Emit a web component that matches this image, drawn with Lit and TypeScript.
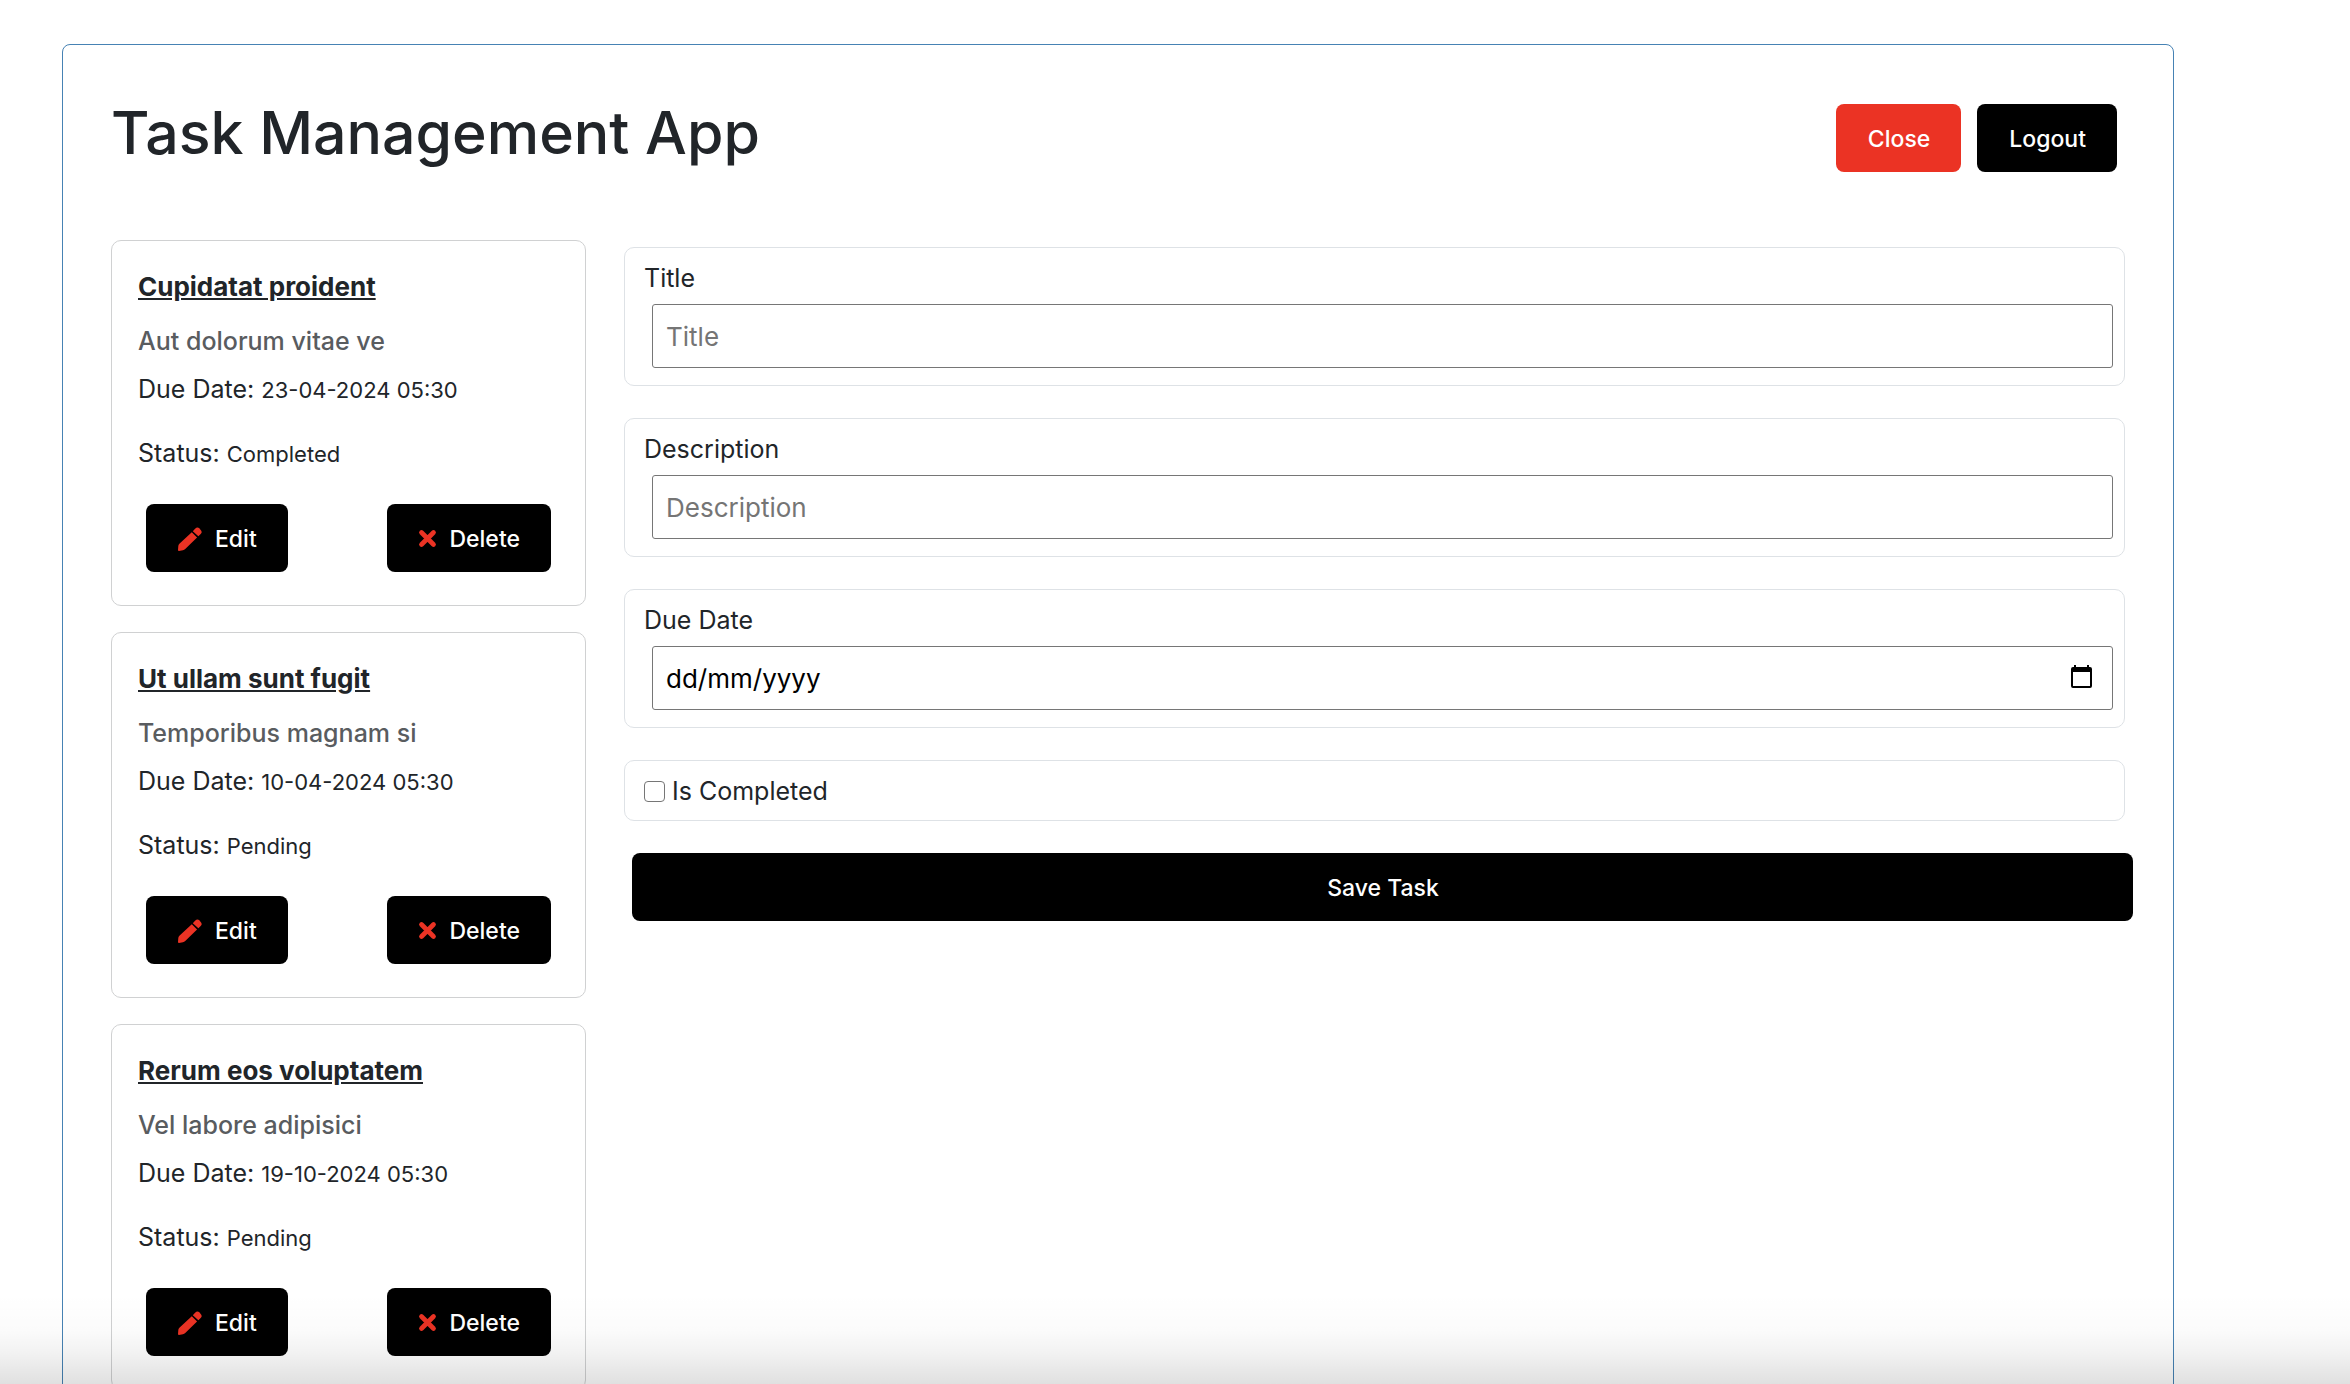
import { LitElement, html, css, svg } from "lit";
import { customElement, property, state } from "lit/decorators.js";

interface Task {
  title: string;
  description: string;
  due: string;
  completed: boolean;
}

const TASKS: Task[] = [
  { title: "Cupidatat proident", description: "Aut dolorum vitae ve", due: "23-04-2024 05:30", completed: true },
  { title: "Ut ullam sunt fugit", description: "Temporibus magnam si", due: "10-04-2024 05:30", completed: false },
  { title: "Rerum eos voluptatem", description: "Vel labore adipisici", due: "19-10-2024 05:30", completed: false },
];

const shared = css`
  *,
  *::before,
  *::after {
    box-sizing: border-box;
  }
  h1,
  h2,
  p {
    margin: 0;
  }
  .btn {
    display: inline-flex;
    align-items: center;
    justify-content: center;
    height: 68px;
    padding: 1px 31px 0 32px;
    border: 0;
    border-radius: 8px;
    background: #000;
    color: #fff;
    font: 500 23px/36px Inter, "Liberation Sans", sans-serif;
    cursor: pointer;
  }
  .btn-danger {
    background: #eb3324;
  }
`;

const pencilIcon = svg`
  <path d="M42 16L58 32L22 67Q19 70 15 71L3 73Q0 73 0 70L1 57Q2 53 5 50Z" />
  <path d="M45 13L52 5Q59 -2 65 4L69 9Q75 16 69 21L62 28Z" />
`;

@customElement("task-card")
export class TaskCard extends LitElement {
  @property({ attribute: false }) task!: Task;

  static styles = [
    shared,
    css`
      :host {
        display: block;
      }
      .card {
        padding: 26px;
        border: 1px solid #d0d1d2;
        border-radius: 10px;
        background: #fff;
      }
      .title {
        padding-top: 4px;
        font-size: 26px;
        font-weight: 700;
        line-height: 32px;
        text-decoration: underline;
      }
      .description {
        padding-top: 22px;
        color: #595c5f;
        font-size: 25px;
        font-weight: 500;
        line-height: 32px;
      }
      .meta {
        padding-top: 16px;
        font-size: 25px;
        line-height: 32px;
      }
      .meta + .meta {
        padding-top: 32px;
      }
      .value {
        font-size: 22px;
        line-height: 24px;
      }
      .actions {
        display: flex;
        justify-content: space-between;
        padding: 35px 8px 7px;
      }
      .icon {
        flex: none;
        overflow: visible;
        fill: #eb3324;
      }
      .icon-edit {
        width: 24px;
        height: 24px;
        margin-right: 13px;
      }
      .icon-delete {
        width: 17px;
        height: 17px;
        margin-right: 13px;
      }
    `,
  ];

  render() {
    const { title, description, due, completed } = this.task;
    return html`
      <article class="card">
        <h2 class="title">${title}</h2>
        <p class="description">${description}</p>
        <p class="meta">Due Date: <span class="value">${due}</span></p>
        <p class="meta">Status: <span class="value">${completed ? "Completed" : "Pending"}</span></p>
        <div class="actions">
          <button class="btn" type="button">
            <svg class="icon icon-edit" viewBox="0 0 73 73" aria-hidden="true">${pencilIcon}</svg>
            Edit
          </button>
          <button class="btn" type="button">
            <svg class="icon icon-delete" viewBox="0 0 17 17" aria-hidden="true">
              <path d="M2.5 2.5L14.5 14.5M14.5 2.5L2.5 14.5" stroke="#eb3324" stroke-width="4.7" stroke-linecap="round" />
            </svg>
            Delete
          </button>
        </div>
      </article>
    `;
  }
}

@customElement("task-form")
export class TaskForm extends LitElement {
  static styles = [
    shared,
    css`
      :host {
        display: block;
      }
      .form {
        display: flex;
        flex-direction: column;
        gap: 32px;
      }
      .field {
        display: flex;
        flex-direction: column;
        padding: 12px 11px 17px 19px;
        border: 1px solid #dee2e6;
        border-radius: 10px;
      }
      .label {
        font-size: 25px;
        line-height: 36px;
      }
      .control {
        display: flex;
        align-items: center;
        height: 64px;
        margin: 8px 0 0 8px;
        padding: 0 20px 0 0;
        border: 1px solid #767676;
        border-radius: 3px;
        background: #fff;
      }
      .input {
        flex: 1;
        min-width: 0;
        height: 100%;
        padding: 0 13px;
        border: 0;
        background: none;
        color: #000;
        font: 400 26px/36px Inter, "Liberation Sans", sans-serif;
        outline: none;
      }
      .input::placeholder {
        color: #757575;
        opacity: 1;
      }
      .input-date::placeholder {
        color: #000;
      }
      .picker {
        display: flex;
        padding: 0;
        border: 0;
        background: none;
        cursor: pointer;
      }
      .picker-icon {
        width: 21px;
        height: 26px;
      }
      .field-check {
        flex-direction: row;
        align-items: center;
        gap: 7px;
        padding: 12px 19px 11px;
      }
      .checkbox {
        appearance: none;
        width: 21px;
        height: 21px;
        margin: 0;
        border: 1px solid #767676;
        border-radius: 4px;
        background: #fff;
      }
      .checkbox:checked {
        background: #0075ff;
      }
      .save {
        margin: 0 -8px 0 8px;
      }
    `,
  ];

  render() {
    return html`
      <form class="form" @submit=${(e: Event) => e.preventDefault()}>
        <div class="field">
          <label class="label" for="title">Title</label>
          <div class="control"><input class="input" id="title" type="text" placeholder="Title" /></div>
        </div>
        <div class="field">
          <label class="label" for="description">Description</label>
          <div class="control"><input class="input" id="description" type="text" placeholder="Description" /></div>
        </div>
        <div class="field">
          <label class="label" for="due">Due Date</label>
          <div class="control">
            <input class="input input-date" id="due" type="text" inputmode="numeric" placeholder="dd/mm/yyyy" />
            <button class="picker" type="button" aria-label="Show date picker">
              <svg class="picker-icon" viewBox="0 0 21 26" aria-hidden="true">
                <path fill-rule="evenodd" d="M3 0h2v2h11V0h2v2h1a2 2 0 0 1 2 2v17a2 2 0 0 1-2 2H2a2 2 0 0 1-2-2V4a2 2 0 0 1 2-2h1zM2 7v14h17V7z" />
              </svg>
            </button>
          </div>
        </div>
        <div class="field field-check">
          <input class="checkbox" id="completed" type="checkbox" />
          <label class="label" for="completed">Is Completed</label>
        </div>
        <button class="btn save" type="submit">Save Task</button>
      </form>
    `;
  }
}

@customElement("app-root")
export class AppRoot extends LitElement {
  @state() private tasks = TASKS;

  static styles = [
    shared,
    css`
      :host {
        display: block;
        position: relative;
        height: 100vh;
        overflow: hidden;
        background: #fff;
        color: #212529;
        font-family: Inter, "Liberation Sans", sans-serif;
      }
      .shell {
        margin: 44px 176px 0 62px;
        padding: 59px 48px 48px;
        border: 1px solid #4682b4;
        border-radius: 8px;
      }
      .header {
        display: flex;
        align-items: flex-start;
        justify-content: space-between;
        padding-right: 8px;
      }
      .heading {
        font-size: 59px;
        font-weight: 500;
        line-height: 58px;
      }
      .header-actions {
        display: flex;
        gap: 16px;
      }
      .columns {
        display: grid;
        grid-template-columns: 475px 1fr;
        gap: 38px;
        padding-top: 68px;
      }
      .tasks {
        display: flex;
        flex-direction: column;
        gap: 26px;
      }
      .editor {
        padding-top: 7px;
      }
      .fade {
        position: absolute;
        right: 0;
        bottom: 0;
        left: 0;
        height: 90px;
        background: linear-gradient(rgba(0, 0, 0, 0), rgba(0, 0, 0, 0.015) 40%, rgba(0, 0, 0, 0.05) 65%, rgba(0, 0, 0, 0.12));
        pointer-events: none;
      }
    `,
  ];

  render() {
    return html`
      <main class="shell">
        <header class="header">
          <h1 class="heading">Task Management App</h1>
          <div class="header-actions">
            <button class="btn btn-danger" type="button">Close</button>
            <button class="btn" type="button">Logout</button>
          </div>
        </header>
        <div class="columns">
          <section class="tasks">
            ${this.tasks.map((task) => html`<task-card .task=${task}></task-card>`)}
          </section>
          <section class="editor"><task-form></task-form></section>
        </div>
      </main>
      <div class="fade"></div>
    `;
  }
}
